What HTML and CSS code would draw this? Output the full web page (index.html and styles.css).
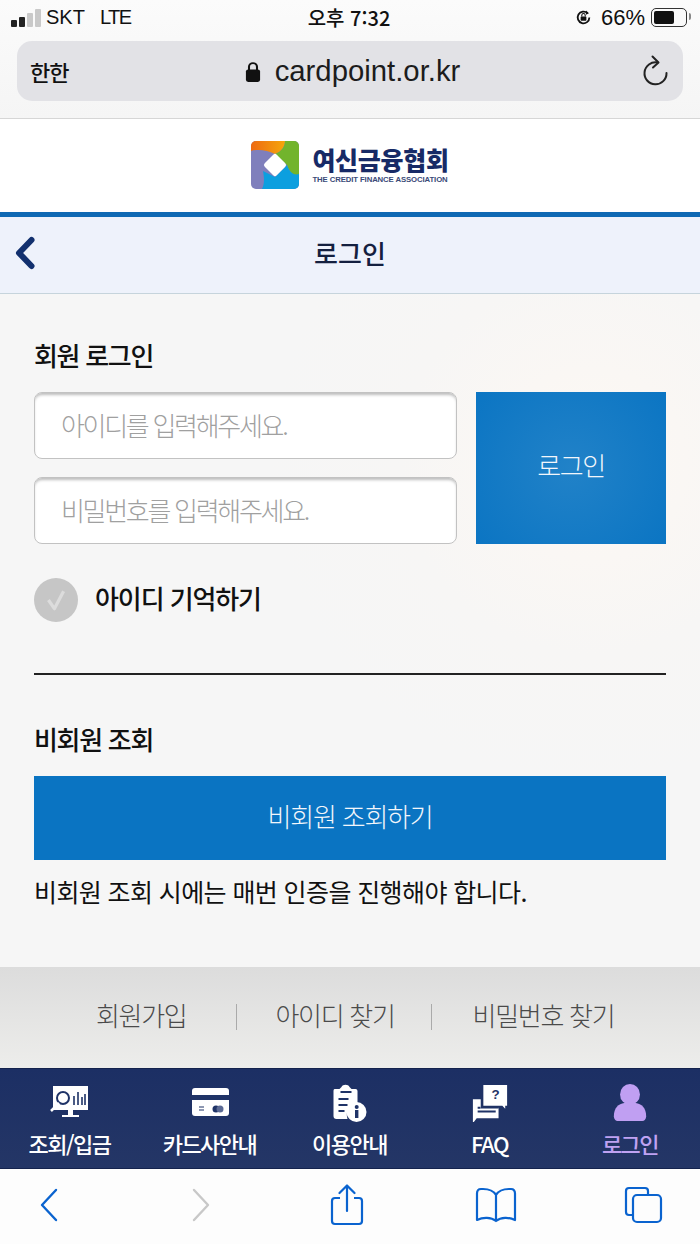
FILE: index.html
```html
<!DOCTYPE html>
<html lang="ko">
<head>
    <meta charset="UTF-8">
    <meta name="viewport" content="width=device-width, initial-scale=1.0">
    <title>로그인</title>
    <link rel="stylesheet" href="styles.css">
</head>
<body>
    <div class="browser-top">
        <div class="status-bar">
            <div class="status-left">
                <span class="signal"><i class="on s1"></i><i class="on s2"></i><i class="s3"></i><i class="s4"></i></span>
                <span class="carrier">SKT</span>
                <span class="network">LTE</span>
            </div>
            <div class="status-time">오후 7:32</div>
            <div class="status-right">
                <svg class="rotation-lock" viewBox="0 0 16 16" width="17" height="17">
                    <path d="M13.500 8a5.500 5.500 0 1 1-1.600-3.900" fill="none" stroke="#111" stroke-width="1.700"/>
                    <path d="M10.500 1.500l2.600 2.400-2.800 1.600z" fill="#111"/>
                    <rect x="5.300" y="7" width="5.400" height="4" rx=".6" fill="#111"/>
                    <path d="M6.400 7V5.900a1.600 1.600 0 0 1 3.200 0V7" fill="none" stroke="#111" stroke-width="1"/>
                </svg>
                <span class="percent">66%</span>
                <span class="battery"><i></i></span>
            </div>
        </div>
        <div class="address-bar">
            <span class="aa">한한</span>
            <div class="url">
                <svg viewBox="0 0 14 22" width="16" height="23" preserveAspectRatio="none">
                    <path d="M3.500 10V6.500a3.500 3.500 0 0 1 7 0V10" fill="none" stroke="#111" stroke-width="1.800"/>
                    <rect x="0.800" y="9" width="12.400" height="12" rx="2" fill="#111"/>
                </svg>
                <span>cardpoint.or.kr</span>
            </div>
            <svg class="reload" viewBox="0 0 28 32" width="28" height="32">
                <path d="M16.500 7.500A11 11 0 1 0 25.500 18" fill="none" stroke="#222" stroke-width="2" stroke-linecap="round"/>
                <path d="M11.500 1.500l6 6-5.500 5" fill="none" stroke="#222" stroke-width="2" stroke-linecap="round" stroke-linejoin="round"/>
            </svg>
        </div>
    </div>

    <header class="site-header">
        <svg class="logo-mark" viewBox="0 0 48 48" width="48" height="48">
            <defs>
                <clipPath id="logo-clip"><rect width="48" height="48" rx="5"/></clipPath>
                <linearGradient id="logo-orange" x1="0" y1="0" x2="1" y2="0">
                    <stop offset="0" stop-color="#ee6a12"/>
                    <stop offset="1" stop-color="#f5a60a"/>
                </linearGradient>
            </defs>
            <g clip-path="url(#logo-clip)">
                <rect width="48" height="48" fill="#7f7fbc"/>
                <path d="M0 0H34C34 6 30 11 24 13C16 9 7 8 0 10z" fill="url(#logo-orange)"/>
                <path d="M34 0H48V34C42 36 38 30 36 24L24 13C30 11 34 6 34 0z" fill="#72b42c"/>
                <path d="M48 33V48H11C14 42 13 36 12 30L24 36L36 24C38 30 42 35 48 33z" fill="#0c9fdf"/>
            </g>
            <path d="M24 15.500L32.500 24 24 32.500 15.500 24z" fill="#fff" stroke="#fff" stroke-width="5" stroke-linejoin="round"/>
        </svg>
        <div class="logo-text">
            <strong>여신금융협회</strong>
            <small>THE CREDIT FINANCE ASSOCIATION</small>
        </div>
    </header>

    <div class="title-bar">
        <svg class="back" viewBox="0 0 22 34" width="22" height="34">
            <path d="M17.500 4L5 17l12.500 13" fill="none" stroke="#12306e" stroke-width="6" stroke-linecap="round" stroke-linejoin="round"/>
        </svg>
        <h1>로그인</h1>
    </div>

    <main class="content">
        <h2>회원 로그인</h2>
        <div class="login-row">
            <div class="fields">
                <input class="field" type="text" placeholder="아이디를 입력해주세요.">
                <input class="field" type="password" placeholder="비밀번호를 입력해주세요.">
            </div>
            <button class="btn btn-login">로그인</button>
        </div>
        <label class="remember">
            <span class="check">
                <svg viewBox="0 0 24 24" width="26" height="26">
                    <path d="M5 12l5.500 8L19 4" fill="none" stroke="#dcdcdc" stroke-width="3" stroke-linejoin="round"/>
                </svg>
            </span>
            <span class="remember-text">아이디 기억하기</span>
        </label>
        <hr class="divider">
        <h2>비회원 조회</h2>
        <button class="btn btn-guest">비회원 조회하기</button>
        <p class="note">비회원 조회 시에는 매번 인증을 진행해야 합니다.</p>
    </main>

    <nav class="footer-links">
        <a>회원가입</a>
        <span class="sep"></span>
        <a>아이디 찾기</a>
        <span class="sep"></span>
        <a>비밀번호 찾기</a>
    </nav>

    <nav class="tab-bar">
        <a class="tab">
            <svg viewBox="0 0 40 36" width="40" height="36">
                <rect x="3" y="1" width="35" height="24" fill="#fff"/>
                <circle cx="13" cy="13" r="6" fill="#fff" stroke="#1f3367" stroke-width="2"/>
                <path d="M9 18L1 26" stroke="#fff" stroke-width="2.500"/>
                <path d="M24 20V11M28 20V7M32 20V12M35 20V9" stroke="#1f3367" stroke-width="1.600"/>
                <path d="M18 25h5v5h6v2H12v-2h6z" fill="#fff"/>
            </svg>
            <span>조회/입금</span>
        </a>
        <a class="tab">
            <svg viewBox="0 0 40 36" width="40" height="36">
                <rect x="2" y="3" width="37" height="28" rx="3" fill="#fff"/>
                <rect x="2" y="10" width="37" height="5" fill="#1f3367"/>
                <path d="M9 22h5M9 25h5" stroke="#1f3367" stroke-width="1.200"/>
                <circle cx="26" cy="24" r="3.500" fill="#1f3367"/>
                <circle cx="30" cy="24" r="3.500" fill="#5b6a94"/>
            </svg>
            <span>카드사안내</span>
        </a>
        <a class="tab">
            <svg viewBox="4 1 35 38" width="40" height="40">
                <path d="M6 6h5l2-2c1-3 7-3 8 0l2 2h4a2 2 0 0 1 2 2v12a12 12 0 0 0-10 16H8a3 3 0 0 1-3-3V8a2 2 0 0 1 1-2z" fill="#fff"/>
                <path d="M12 9h11M10 16h10M10 22h9M10 28h6" stroke="#1f3367" stroke-width="2"/>
                <circle cx="28" cy="29" r="10" fill="#fff"/>
                <rect x="26.500" y="27" width="3.400" height="8" fill="#1f3367"/>
                <circle cx="28.200" cy="24" r="2" fill="#1f3367"/>
            </svg>
            <span>이용안내</span>
        </a>
        <a class="tab">
            <svg viewBox="0 0 40 40" width="40" height="40">
                <path d="M13 1h25v22h-2v3l-3-3H13z" fill="#fff"/>
                <text x="25" y="16" class="faq-mark">?</text>
                <path d="M2 16h9v9h18v11H6l-3 4H2z" fill="#fff"/>
                <path d="M7 25h3M7 29h19" stroke="#1f3367" stroke-width="2"/>
                <path d="M11 15v10h18" fill="none" stroke="#1f3367" stroke-width="1.500"/>
            </svg>
            <span>FAQ</span>
        </a>
        <a class="tab active">
            <svg viewBox="0 0 36 40" width="36" height="40">
                <ellipse cx="18" cy="11" rx="10.500" ry="11" fill="#c09ff2"/>
                <path d="M1 34c0-9 5-13 11-14h12c6 1 11 5 11 14 0 3-2 5-4 5H5c-2 0-4-2-4-5z" fill="#c09ff2"/>
            </svg>
            <span>로그인</span>
        </a>
    </nav>

    <div class="browser-bottom">
        <svg viewBox="0 0 20 34" width="20" height="34">
            <path d="M17 2L3 17l14 15" fill="none" stroke="#0a63cf" stroke-width="2.400" stroke-linecap="round" stroke-linejoin="round"/>
        </svg>
        <svg viewBox="0 0 20 34" width="20" height="34">
            <path d="M3 2l14 15L3 32" fill="none" stroke="#c8c8c8" stroke-width="2.400" stroke-linecap="round" stroke-linejoin="round"/>
        </svg>
        <svg viewBox="0 0 34 42" width="34" height="42">
            <path d="M10 14H5a3 3 0 0 0-3 3v20a3 3 0 0 0 3 3h24a3 3 0 0 0 3-3V17a3 3 0 0 0-3-3h-5" fill="none" stroke="#0a63cf" stroke-width="2.200"/>
            <path d="M17 27V2M9.500 9L17 1.500 24.500 9" fill="none" stroke="#0a63cf" stroke-width="2.200" stroke-linecap="round" stroke-linejoin="round"/>
        </svg>
        <svg viewBox="0 0 42 36" width="42" height="36">
            <path d="M21 8C18 3 13 2 8 2H6C3.500 2 2 4 2 6.500V33c6-3 14-3 19 1 5-4 13-4 19-1V6.500C40 4 38.500 2 36 2h-2C29 2 24 3 21 8zM21 8v26" fill="none" stroke="#0a63cf" stroke-width="2.200" stroke-linejoin="round"/>
        </svg>
        <svg viewBox="0 0 40 38" width="40" height="38">
            <path d="M8 29H5a3 3 0 0 1-3-3V5a3 3 0 0 1 3-3h16a3 3 0 0 1 3 3v3" fill="none" stroke="#0a63cf" stroke-width="2.200"/>
            <rect x="9" y="9" width="28" height="27" rx="4" fill="none" stroke="#0a63cf" stroke-width="2.200"/>
        </svg>
    </div>
</body>
</html>
```

FILE: styles.css
```css
* {
    box-sizing: border-box;
}
html, body {
    margin: 0;
    padding: 0;
}
body {
    width: 700px;
    height: 1244px;
    overflow: hidden;
    font-family: "Noto Sans CJK KR", "Noto Sans", sans-serif;
    background: #f6f6f6;
    color: #111;
}
.browser-top {
    height: 119px;
    background: linear-gradient(to bottom, #fbfbfb, #f5f5f5);
    border-bottom: 1px solid #d6d6d6;
}
.status-bar {
    height: 41px;
    padding: 0 13px 6px 11px;
    display: grid;
    grid-template-columns: 1fr auto 1fr;
    align-items: center;
    font-family: "Liberation Sans", sans-serif;
    font-size: 20px;
}
.status-left {
    display: flex;
    align-items: center;
}
.signal {
    display: flex;
    align-items: flex-end;
    gap: 2px;
    height: 18px;
    margin-right: 5px;
}
.signal i {
    display: block;
    width: 6px;
    background: #c9c9c9;
    border-radius: 1px;
}
.signal i.on {
    background: #222;
}
.s1 { height: 7px; }
.s2 { height: 10px; }
.s3 { height: 14px; }
.s4 { height: 18px; }
.network {
    margin-left: 15px;
    letter-spacing: -1.500px;
}
.status-time {
    font-family: "Noto Sans CJK KR", sans-serif;
    font-size: 20px;
    font-weight: 500;
}
.status-right {
    display: flex;
    justify-content: flex-end;
    align-items: center;
}
.percent {
    font-size: 22px;
    margin: 0 6px 0 9px;
    white-space: nowrap;
}
.battery {
    position: relative;
    width: 36px;
    height: 19px;
    border: 1.500px solid #333;
    border-radius: 5px;
    padding: 2px;
}
.battery i {
    display: block;
    width: 20px;
    height: 100%;
    background: #111;
    border-radius: 2px;
}
.battery::after {
    content: "";
    position: absolute;
    right: -5px;
    top: 4px;
    width: 2px;
    height: 7px;
    background: #888;
    border-radius: 0 2px 2px 0;
}
.address-bar {
    height: 60px;
    margin: 0 17px;
    padding: 0 14px 0 13px;
    background: #e2e2e6;
    border-radius: 15px;
    display: grid;
    grid-template-columns: 1fr auto 1fr;
    align-items: center;
}
.aa {
    font-size: 22px;
    font-weight: 500;
    letter-spacing: -1px;
}
.url {
    display: flex;
    align-items: center;
    gap: 14px;
    font-family: "Liberation Sans", sans-serif;
    font-size: 29.300px;
    color: #1c1c1c;
    margin-left: 6px;
}
.reload {
    justify-self: end;
}
.site-header {
    height: 93px;
    background: #fff;
    display: flex;
    justify-content: center;
    align-items: center;
    gap: 13px;
    padding-bottom: 1px;
}
.logo-text {
    display: flex;
    flex-direction: column;
    color: #172a66;
}
.logo-text strong {
    font-size: 25px;
    line-height: 30px;
    font-weight: 900;
    letter-spacing: -.3px;
}
.logo-text small {
    font-family: "Liberation Sans", sans-serif;
    font-size: 7.750px;
    line-height: 12px;
    font-weight: 700;
    white-space: nowrap;
    letter-spacing: -.1px;
    color: #3a4a78;
}
.title-bar {
    position: relative;
    height: 82px;
    background: #eef2fb;
    border-top: 5px solid #0f69b4;
    border-bottom: 1px solid #c6d4dc;
    padding-bottom: 6px;
    display: flex;
    justify-content: center;
    align-items: center;
}
.title-bar h1 {
    margin: 0;
    font-size: 26px;
    font-weight: 500;
    color: #14203f;
}
.back {
    position: absolute;
    left: 14px;
    top: 19px;
}
.content {
    height: 673px;
    padding: 43px 34px 0;
    background: radial-gradient(circle at 590px 170px, #fdf8f3 0, #f7f6f5 190px, #f6f6f6 320px);
}
.content h2 {
    margin: 0;
    font-size: 26px;
    line-height: 36px;
    font-weight: 500;
    letter-spacing: -1.300px;
}
.login-row {
    display: flex;
    justify-content: space-between;
    margin-top: 19px;
    height: 152px;
}
.fields {
    width: 423px;
    display: flex;
    flex-direction: column;
    justify-content: space-between;
}
.field {
    display: block;
    width: 100%;
    height: 67px;
    padding: 0 26px 3px;
    border: 1px solid #c2c2c2;
    border-radius: 8px;
    background: #fff;
    box-shadow: inset 0 3px 3px -1px #bdbdbd;
    font-family: inherit;
    font-size: 26px;
    letter-spacing: -2.300px;
    outline: none;
}
.field::placeholder {
    color: #a0a0a0;
    font-weight: 300;
    opacity: 1;
}
.btn {
    border: none;
    background: #0a74c2;
    color: #f2f6fb;
    font-family: inherit;
    font-weight: 300;
    font-size: 26px;
    padding: 0 0 5px;
    letter-spacing: -1.200px;
}
.btn-login {
    width: 190px;
    background: radial-gradient(circle at center, #2182c8 0, #0b75c3 100%);
    padding-bottom: 8px;
    letter-spacing: -1.500px;
}
.remember {
    display: flex;
    align-items: center;
    gap: 17px;
    margin-top: 34px;
    height: 44px;
    font-size: 26px;
    font-weight: 500;
    letter-spacing: -1.100px;
}
.remember-text {
    margin-bottom: 5px;
}
.check {
    width: 44px;
    height: 44px;
    border-radius: 50%;
    background: #c6c6c6;
    display: flex;
    justify-content: center;
    align-items: center;
}
.divider {
    margin: 51px 0 0;
    border: none;
    border-top: 2px solid #222;
}
.content .divider + h2 {
    margin-top: 46px;
}
.btn-guest {
    display: block;
    width: 100%;
    height: 84px;
    margin-top: 19px;
}
.note {
    margin: 13px 0 0;
    font-size: 25px;
    line-height: 36px;
    font-weight: 400;
    letter-spacing: -.6px;
    white-space: nowrap;
}
.footer-links {
    height: 101px;
    background: linear-gradient(to bottom, #dcdcdc, #ededeb);
    display: flex;
    align-items: center;
    padding: 0 0 6px 96px;
    font-size: 26px;
    font-weight: 300;
    letter-spacing: -1.300px;
    color: #4a4a4a;
    white-space: nowrap;
}
.sep {
    width: 1px;
    height: 26px;
    margin: 5px 38px 0 50px;
    background: #aaa;
}
.sep:nth-of-type(2) {
    margin: 5px 41px 0 36px;
}
.tab-bar {
    height: 101px;
    background: linear-gradient(to bottom, #1c2f64, #243666);
    border-top: 1px solid #14234d;
    border-bottom: 1px solid #14234d;
    display: grid;
    grid-template-columns: 139px 141px 139px 141px 140px;
    padding-top: 15px;
}
.tab {
    display: flex;
    flex-direction: column;
    align-items: center;
    color: #fff;
    font-size: 22px;
    font-weight: 500;
    letter-spacing: -1.500px;
    line-height: 30px;
}
.tab svg {
    height: 38px;
    margin-bottom: 6px;
    flex: none;
}
.tab.active {
    color: #bfa2f2;
}
.faq-mark {
    font-family: "Liberation Sans", sans-serif;
    font-size: 14px;
    font-weight: 700;
    fill: #1f3367;
    text-anchor: middle;
}
.browser-bottom {
    height: 75px;
    background: #fdfdfd;
    display: grid;
    grid-template-columns: 98px 206px 86px 211px 85px;
    justify-items: center;
    align-items: center;
    padding-bottom: 4px;
}
```
